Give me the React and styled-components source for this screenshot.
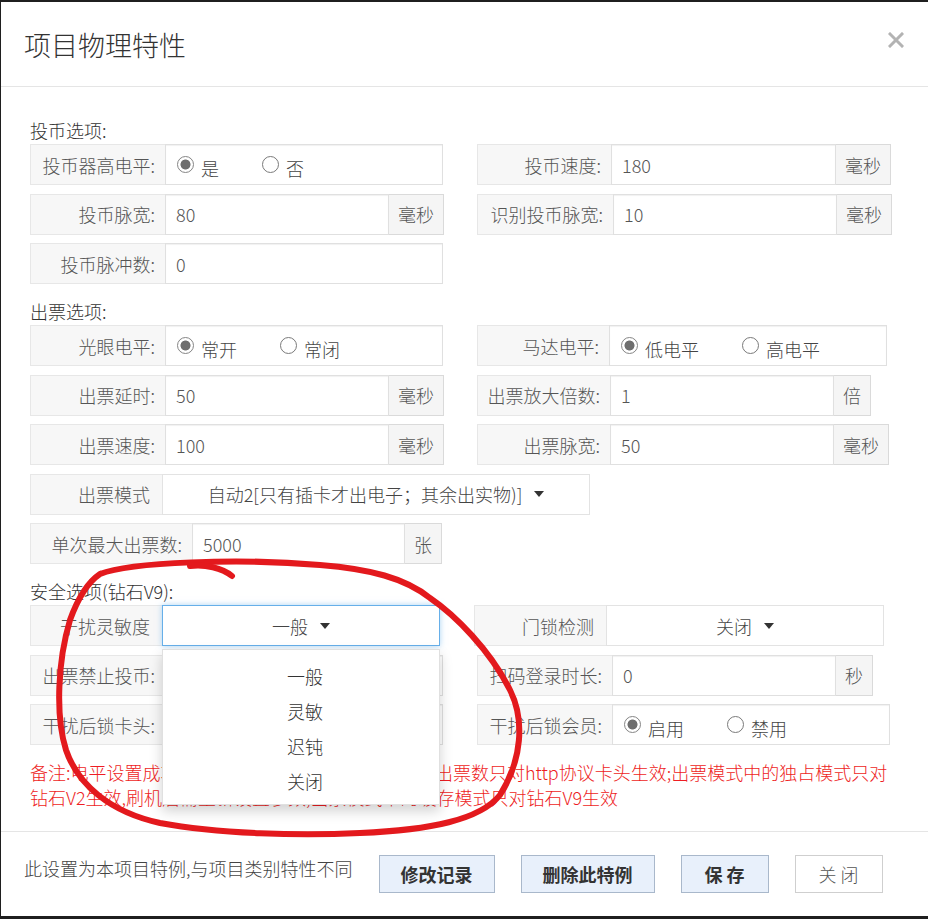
import React from 'react'
import styled, { createGlobalStyle } from 'styled-components'

const GlobalStyle = createGlobalStyle`
  * { box-sizing: border-box; }
  html, body {
    margin: 0;
    padding: 0;
    background: #1f1f1f;
  }
  body {
    font-family: "Noto Sans CJK SC", "Microsoft YaHei", sans-serif;
    font-size: 18px;
    font-weight: 300;
    color: #333;
  }
`

const Page = styled.div`
  position: relative;
  width: 928px;
  height: 919px;
  padding: 2px 0 3px 1px;
  background: #1f1f1f;
`

const Dialog = styled.div`
  width: 927px;
  height: 914px;
  background: #fff;
  display: flex;
  flex-direction: column;
`

const Header = styled.div`
  height: 85px;
  flex: none;
  display: flex;
  align-items: center;
  justify-content: space-between;
  padding: 0 23px 0 23px;
  border-bottom: 1px solid #e5e5e5;
`

const Title = styled.h1`
  margin: 0;
  font-size: 27px;
  font-weight: 300;
  color: #333;
  line-height: 1;
`

const CloseBtn = styled.button`
  border: 0;
  background: none;
  padding: 0;
  width: 19px;
  height: 19px;
  margin-bottom: 8px;
  cursor: pointer;
  display: flex;
  align-items: center;
  justify-content: center;
`

const Body = styled.div`
  flex: 1;
  padding: 32px 29px 0 29px;
`

const Section = styled.section`
  & + & {
    margin-top: 16px;
  }
`

const SectionTitle = styled.div`
  height: 22px;
  line-height: 22px;
  margin-bottom: 3px;
  color: #333;
`

const Grid = styled.div`
  display: grid;
  grid-template-columns: 413px 413px;
  grid-auto-rows: 41px;
  column-gap: 34px;
  row-gap: 8.5px;
`

const Group = styled.div`
  position: relative;
  display: flex;
  height: 41px;
  width: ${p => (p.$w ? `${p.$w}px` : '100%')};
  grid-column: ${p => (p.$span ? '1 / span 2' : 'auto')};
  margin-left: ${p => p.$shift || 0}px;
`

const Label = styled.div`
  flex: 0 0 ${p => p.$w || 135}px;
  display: flex;
  align-items: center;
  justify-content: flex-end;
  padding-right: ${p => (p.$plain ? 12 : 10)}px;
  background: #f7f7f7;
  border: 1px solid #e7e7e7;
  border-right: 0;
  color: #555;
  white-space: nowrap;
`

const Field = styled.div`
  flex: ${p => (p.$w ? `0 0 ${p.$w}px` : '1 1 auto')};
  display: flex;
  align-items: center;
  padding: 0 10px;
  background: #fff;
  border: 1px solid #e0e0e0;
  box-shadow: inset 0 1px 1px rgba(0, 0, 0, 0.06);
  color: #555;
  white-space: nowrap;
`

const Addon = styled.div`
  flex: none;
  display: flex;
  align-items: center;
  padding: 0 9px;
  background: #f5f5f5;
  border: 1px solid #dadada;
  border-left: 0;
  color: #555;
`

const Select = styled.div`
  position: relative;
  flex: 1 1 auto;
  display: flex;
  align-items: center;
  justify-content: center;
  background: #fff;
  border: 1px solid ${p => (p.$focus ? '#66afe9' : '#e3e3e3')};
  box-shadow: ${p => (p.$focus ? '0 0 6px rgba(102, 175, 233, 0.55)' : 'none')};
  color: #444;
  white-space: nowrap;
`

const Caret = styled.span`
  display: inline-block;
  width: 0;
  height: 0;
  margin-left: 12px;
  border-left: 5px solid transparent;
  border-right: 5px solid transparent;
  border-top: 6px solid #333;
`

const Menu = styled.ul`
  position: absolute;
  top: calc(100% + 4px);
  left: -1px;
  right: -1px;
  margin: 0;
  padding: 9px 0 5px;
  list-style: none;
  background: #fff;
  border: 1px solid rgba(0, 0, 0, 0.12);
  box-shadow: 0 6px 12px rgba(0, 0, 0, 0.18);
  z-index: 5;
`

const MenuItem = styled.li`
  line-height: 35px;
  text-align: center;
  padding-left: 8px;
  color: #333;
`

const RadioOption = styled.label`
  display: flex;
  align-items: center;
  margin-right: 43px;
  color: #444;

  &:first-child {
    margin-left: 1px;
  }
`

const RadioDot = styled.span`
  width: 17px;
  height: 17px;
  border-radius: 50%;
  border: ${p => (p.$on ? '1.5px solid #858585' : '1px solid #7a7a7a')};
  background: ${p => (p.$on ? 'radial-gradient(circle, #6e6e6e 0 4.6px, #fff 5.4px)' : '#fff')};
  margin-right: 7px;
  flex: none;
`

const RadioText = styled.span`
  margin-top: 6px;
`

const Note = styled.div`
  margin-top: 15px;
  color: #ee1d23;
  line-height: 25px;
  white-space: nowrap;
`

const Footer = styled.div`
  height: 85px;
  flex: none;
  display: flex;
  align-items: flex-start;
  gap: 26px;
  padding: 23px 0 0 23px;
  border-top: 1px solid #e5e5e5;
`

const FooterText = styled.div`
  line-height: 24px;
  margin-top: 1px;
  color: #444;
`

const Btn = styled.button`
  height: 38px;
  min-width: 88px;
  padding: 0 21px;
  font-family: inherit;
  font-size: 18px;
  font-weight: ${p => (p.$plain ? 300 : 'bold')};
  color: ${p => (p.$plain ? '#555' : '#333')};
  background: ${p => (p.$plain ? '#fff' : '#e8f0fb')};
  border: 1px solid ${p => (p.$plain ? '#cfcfcf' : '#a9b8cb')};
  white-space: pre;
  cursor: pointer;
`

const Annotation = styled.svg`
  position: absolute;
  top: 0;
  left: 0;
  pointer-events: none;
  z-index: 10;
`

const Radios = ({ options, value }) => (
  <Field>
    {options.map(o => (
      <RadioOption key={o}>
        <RadioDot $on={o === value} />
        <RadioText>{o}</RadioText>
      </RadioOption>
    ))}
  </Field>
)

const InputGroup = ({ label, value, unit, w, lw, fw = 224 }) => (
  <Group $w={w}>
    <Label $w={lw}>{label}</Label>
    <Field $w={unit ? fw : undefined}>{value}</Field>
    {unit && <Addon>{unit}</Addon>}
  </Group>
)

const RadioGroup = ({ label, options, value, w, lw }) => (
  <Group $w={w}>
    <Label $w={lw}>{label}</Label>
    <Radios options={options} value={value} />
  </Group>
)

const App = () => (
  <Page>
    <GlobalStyle />
    <Dialog>
      <Header>
        <Title>项目物理特性</Title>
        <CloseBtn aria-label="关闭">
          <svg width="16" height="16" viewBox="0 0 16 16">
            <path d="M2 2 L14 14 M14 2 L2 14" stroke="#b3b3b3" strokeWidth="3" strokeLinecap="square" />
          </svg>
        </CloseBtn>
      </Header>

      <Body>
        <Section>
          <SectionTitle>投币选项:</SectionTitle>
          <Grid>
            <RadioGroup label="投币器高电平:" options={['是', '否']} value="是" />
            <InputGroup label="投币速度:" value="180" unit="毫秒" lw={134} fw={225} />
            <InputGroup label="投币脉宽:" value="80" unit="毫秒" />
            <InputGroup label="识别投币脉宽:" value="10" unit="毫秒" lw={136} fw={224} />
            <InputGroup label="投币脉冲数:" value="0" />
          </Grid>
        </Section>

        <Section>
          <SectionTitle>出票选项:</SectionTitle>
          <Grid>
            <RadioGroup label="光眼电平:" options={['常开', '常闭']} value="常开" />
            <RadioGroup label="马达电平:" options={['低电平', '高电平']} value="低电平" lw={132} w={410} />
            <InputGroup label="出票延时:" value="50" unit="毫秒" />
            <InputGroup label="出票放大倍数:" value="1" unit="倍" lw={133} w={394} />
            <InputGroup label="出票速度:" value="100" unit="毫秒" />
            <InputGroup label="出票脉宽:" value="50" unit="毫秒" lw={133} />
            <Group $span $w={560}>
              <Label $w={132} $plain>出票模式</Label>
              <Select>
                自动2[只有插卡才出电子；其余出实物)]
                <Caret />
              </Select>
            </Group>
            <InputGroup label="单次最大出票数:" value="5000" unit="张" lw={162} fw={213} w={412} />
          </Grid>
        </Section>

        <Section>
          <SectionTitle>安全选项(钻石V9):</SectionTitle>
          <Grid>
            <Group $w={410}>
              <Label $w={132} $plain>干扰灵敏度</Label>
              <Select $focus>
                一般
                <Caret />
                <Menu>
                  <MenuItem>一般</MenuItem>
                  <MenuItem>灵敏</MenuItem>
                  <MenuItem>迟钝</MenuItem>
                  <MenuItem>关闭</MenuItem>
                </Menu>
              </Select>
            </Group>
            <Group $w={410} $shift={-3}>
              <Label $w={132} $plain>门锁检测</Label>
              <Select>
                关闭
                <Caret />
              </Select>
            </Group>
            <RadioGroup label="出票禁止投币:" options={['是', '否']} value="否" />
            <InputGroup label="扫码登录时长:" value="0" unit="秒" w={396} />
            <RadioGroup label="干扰后锁卡头:" options={['启用', '禁用']} value="启用" />
            <RadioGroup label="干扰后锁会员:" options={['启用', '禁用']} value="启用" />
          </Grid>
        </Section>

        <Note>
          <div>备注:电平设置成功后需重启卡头才能生效;单次最大出票数只对http协议卡头生效;出票模式中的独占模式只对</div>
          <div>钻石V2生效,刷机后需重新设置参数;出票模式中的缓存模式只对钻石V9生效</div>
        </Note>
      </Body>

      <Footer>
        <FooterText>此设置为本项目特例,与项目类别特性不同</FooterText>
        <Btn>修改记录</Btn>
        <Btn>删除此特例</Btn>
        <Btn>保 存</Btn>
        <Btn $plain>关 闭</Btn>
      </Footer>
    </Dialog>

    <Annotation width="928" height="919" viewBox="0 0 928 919">
      <g fill="none" stroke="#e3191d" strokeWidth="6" strokeLinecap="round" strokeLinejoin="round">
        <path d="M100 574 C130 562 240 558 320 565 C370 569 405 578 430 598 C455 615 490 650 510 690 C525 720 522 760 500 795 C480 820 430 830 360 833 C300 836 220 834 160 823 C110 812 78 785 66 750 C55 715 58 660 70 620 C78 598 88 582 100 574" />
        <path d="M232 576 C222 568 205 564 190 566" />
      </g>
    </Annotation>
  </Page>
)

export default App
